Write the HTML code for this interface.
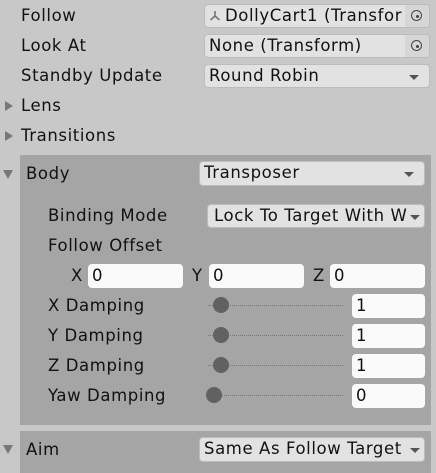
<!DOCTYPE html><html><head><style>
body{margin:0;width:436px;height:473px;background:#c8c8c8;font-family:"DejaVu Sans","Liberation Sans",sans-serif;font-size:16.5px;letter-spacing:0.6px;color:#111;position:relative;overflow:hidden}
div{position:absolute;box-sizing:border-box}
.t{line-height:20px;white-space:nowrap}
.f{background:#e2e2e2;border-radius:4px;border:1px solid #bcbcbc;padding-left:4px;line-height:22px;white-space:nowrap;overflow:hidden}
.i{background:#fafafa;border-radius:4px;padding-left:4px;line-height:24px;height:24px;white-space:nowrap}
.p{background:#a5a5a5}
.arr{position:absolute;right:10px;top:10px;width:0;height:0;border-left:5px solid transparent;border-right:5px solid transparent;border-top:5px solid #555}
.tr{width:0;height:0;border-top:5px solid transparent;border-bottom:5px solid transparent;border-left:8px solid #777}
.td{width:0;height:0;border-left:5px solid transparent;border-right:5px solid transparent;border-top:9px solid #777}
.trk{height:1px;border-top:1px dotted #777}
.k{width:16px;height:16px;border-radius:50%;background:#616161}
.tg{position:absolute;right:0;top:0;width:24px;height:100%;background:#d6d6d6}
.tg:after{content:"";position:absolute;left:6px;top:5px;width:9px;height:9px;border:1.5px solid #444;border-radius:50%}
.tg:before{content:"";position:absolute;left:10.5px;top:9.5px;width:3px;height:3px;background:#444;border-radius:50%}
</style></head><body>
<div class="t" style="left:21px;top:6px">Follow</div>
<div class="f" style="left:204px;top:4px;width:226px;height:24px;padding-left:20px"><svg style="position:absolute;left:4px;top:5px" width="12" height="12" viewBox="0 0 12 12"><path d="M6 1V6M6 6L1.5 10M6 6L10.5 10" stroke="#777" stroke-width="1.6" fill="none"/></svg>DollyCart1 (Transfor<div class="tg"></div></div>
<div class="t" style="left:21px;top:36px">Look At</div>
<div class="f" style="left:204px;top:34px;width:226px;height:24px;">None (Transform)<div class="tg"></div></div>
<div class="t" style="left:21px;top:66px">Standby Update</div>
<div class="f" style="left:204px;top:64px;width:226px;height:24px;">Round Robin<div class="arr"></div></div>
<div class="tr" style="left:5px;top:101px"></div>
<div class="t" style="left:21px;top:96px">Lens</div>
<div class="tr" style="left:5px;top:131px"></div>
<div class="t" style="left:21px;top:126px">Transitions</div>

<div class="p" style="left:20px;top:155px;width:411px;height:270px"></div>
<div class="td" style="left:3px;top:170px"></div>
<div class="t" style="left:26px;top:164px">Body</div>
<div class="f" style="left:199px;top:161px;width:226px;height:25px;">Transposer<div class="arr"></div></div>
<div class="t" style="left:48px;top:206px">Binding Mode</div>
<div class="f" style="left:207px;top:204px;width:218px;height:24px;padding-left:6px">Lock To Target With W<div class="arr" style="right:4px;background:#e2e2e2;box-shadow:0 0 0 4px #e2e2e2"></div></div>
<div class="t" style="left:48px;top:236px">Follow Offset</div>
<div class="t" style="left:71px;top:266px">X</div><div class="i" style="left:88px;top:264px;width:95px">0</div>
<div class="t" style="left:192px;top:266px">Y</div><div class="i" style="left:209px;top:264px;width:95px">0</div>
<div class="t" style="left:313px;top:266px">Z</div><div class="i" style="left:330px;top:264px;width:95px">0</div>

<div class="t" style="left:48px;top:296px">X Damping</div><div class="trk" style="left:208px;top:305px;width:135px"></div><div class="k" style="left:213px;top:297px"></div><div class="i" style="left:352px;top:294px;width:73px">1</div>
<div class="t" style="left:48px;top:326px">Y Damping</div><div class="trk" style="left:208px;top:335px;width:135px"></div><div class="k" style="left:213px;top:327px"></div><div class="i" style="left:352px;top:324px;width:73px">1</div>
<div class="t" style="left:48px;top:356px">Z Damping</div><div class="trk" style="left:208px;top:365px;width:135px"></div><div class="k" style="left:213px;top:357px"></div><div class="i" style="left:352px;top:354px;width:73px">1</div>
<div class="t" style="left:48px;top:386px">Yaw Damping</div><div class="trk" style="left:208px;top:395px;width:135px"></div><div class="k" style="left:206px;top:387px"></div><div class="i" style="left:352px;top:384px;width:73px">0</div>

<div class="p" style="left:20px;top:431px;width:411px;height:42px"></div>
<div class="td" style="left:3px;top:445px"></div>
<div class="t" style="left:26px;top:440px">Aim</div>
<div class="f" style="left:199px;top:437px;width:226px;height:25px;">Same As Follow Target<div class="arr" style="right:4px;background:#e2e2e2;box-shadow:0 0 0 3px #e2e2e2"></div></div>
</body></html>
